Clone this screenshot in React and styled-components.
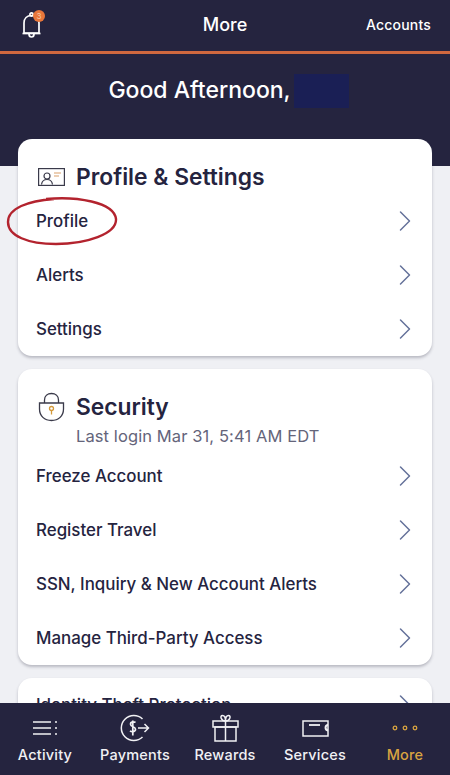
import React from "react";
import styled, { createGlobalStyle } from "styled-components";
import { ChevronRight } from "lucide-react";

const GlobalStyle = createGlobalStyle`
  html, body {
    margin: 0;
    padding: 0;
    background: #eff0f4;
  }
  * {
    box-sizing: border-box;
  }
`;

const navy = "#25243f";

const Screen = styled.div`
  width: 450px;
  height: 775px;
  display: flex;
  flex-direction: column;
  overflow: hidden;
  font-family: Inter, "Liberation Sans", sans-serif;
  background: #eff0f4;
  color: ${navy};
`;

const TopBar = styled.header`
  height: 54px;
  flex: none;
  display: grid;
  grid-template-columns: 1fr auto 1fr;
  align-items: center;
  padding: 0 19px 2px 19px;
  background: ${navy};
  border-bottom: 3px solid #d0683f;
  color: #fff;
`;

const BellWrap = styled.div`
  position: relative;
  width: 24px;
  height: 28px;
  margin-left: 2px;
`;

const Badge = styled.span`
  position: absolute;
  top: -1px;
  left: 12px;
  width: 12px;
  height: 12px;
  border-radius: 50%;
  background: #e8763a;
  color: #f8c9a8;
  font-size: 8px;
  line-height: 12px;
  text-align: center;
`;

const TopTitle = styled.div`
  font-size: 18px;
  font-weight: 500;
`;

const AccountsLink = styled.div`
  justify-self: end;
  font-size: 14px;
  font-weight: 500;
  letter-spacing: 0.2px;
`;

const Hero = styled.div`
  height: 112px;
  flex: none;
  display: flex;
  justify-content: center;
  align-items: flex-start;
  gap: 3px;
  padding: 20px 0 0 7px;
  background: ${navy};
  color: #fff;
`;

const Greeting = styled.div`
  margin-top: -1px;
  font-size: 23px;
  font-weight: 500;
  line-height: 34px;
`;

const Redacted = styled.div`
  width: 55px;
  height: 34px;
  background: #1a1f55;
`;

const Content = styled.main`
  flex: 1;
  min-height: 0;
  margin-top: -27px;
  padding: 0 18px;
  display: flex;
  flex-direction: column;
  gap: 13px;
  overflow: hidden;
  position: relative;
`;

const Card = styled.section`
  flex: none;
  background: #fff;
  border-radius: 14px;
  box-shadow: 0 2px 3px rgba(60, 60, 80, 0.3);
  padding: ${(props) => props.$top}px 0 0;
`;

const CardHead = styled.div`
  display: flex;
  align-items: center;
  gap: 11px;
  margin-bottom: 2px;
  padding: 0 18px 0 20px;
  height: 30px;
`;

const CardTitle = styled.h2`
  margin: 0;
  font-size: 22.8px;
  font-weight: 600;
  line-height: 30px;
  color: ${navy};
`;

const SubLine = styled.div`
  margin: 4px 0 3px 58px;
  font-size: 16.5px;
  letter-spacing: 0.1px;
  line-height: 20px;
  color: #64647a;
`;

const Row = styled.div`
  position: relative;
  height: 54px;
  display: flex;
  align-items: center;
  justify-content: space-between;
  padding: 0 9px 0 18px;
  font-size: 16.9px;
  font-weight: 500;
  color: ${navy};
`;

const Chevron = styled(ChevronRight)`
  width: 36px;
  height: 36px;
  color: #65729a;
  flex: none;
`;

const Scribble = styled.svg`
  position: absolute;
  left: -12px;
  top: 2px;
  pointer-events: none;
`;

const TabBar = styled.nav`
  position: relative;
  height: 72px;
  flex: none;
  display: grid;
  grid-template-columns: repeat(5, 90px);
  background: ${navy};
`;

const Tab = styled.div`
  display: flex;
  flex-direction: column;
  align-items: center;
  padding-top: 9px;
  color: ${(props) => (props.$active ? "#d9a441" : "#f1f1f4")};
`;

const TabIcon = styled.div`
  height: 32px;
  display: flex;
  align-items: center;
  justify-content: center;
`;

const TabLabel = styled.span`
  margin-top: 2px;
  font-size: 14.5px;
  font-weight: 500;
  letter-spacing: 0.2px;
`;

const BellIcon = () => (
  <svg width="24" height="28" viewBox="0 0 24 28" fill="none" stroke="#fff" strokeWidth="1.7" strokeLinejoin="round">
    <circle cx="10.5" cy="3.5" r="1.6" />
    <path d="M3 22V12c0-4.5 3-7.5 7.5-7.5S18 7.500 18 12v10z" />
    <path d="M1.500 22.500h18" />
    <path d="M8 23c0 4 5 4 5 0" />
  </svg>
);

const ProfileCardIcon = () => (
  <svg width="27" height="18" viewBox="0 0 27 18" fill="none" stroke="#3a3a4a" strokeWidth="1.2">
    <rect x="0.600" y="0.600" width="25.800" height="16.800" />
    <circle cx="9" cy="8" r="3" />
    <path d="M3.500 16.500c.5-3.500 2.500-5 5.500-5s5 1.500 5.500 5" />
    <path d="M16 5h7M16 8h5" stroke="#d9a06a" />
  </svg>
);

const LockIcon = () => (
  <svg width="27" height="30" viewBox="0 0 27 30" fill="none" stroke="#3a3a4a" strokeWidth="1.3">
    <path d="M6.500 11V8c0-4 3-6.500 7-6.500s7 2.500 7 6.500v3" />
    <path d="M1.500 11h24v6c0 7-5 11.500-12 11.500S1.500 24 1.500 17z" />
    <circle cx="13.500" cy="16.500" r="2" stroke="#d39a3c" />
    <path d="M13.500 18.500v4" stroke="#d39a3c" />
  </svg>
);

const ActivityIcon = () => (
  <svg width="26" height="16" viewBox="0 0 26 16" fill="none" stroke="currentColor" strokeWidth="1.600">
    <path d="M1 2h18M1 8h18M1 14h18" />
    <path d="M23 2h2M23 8h2M23 14h2" />
  </svg>
);

const PaymentsIcon = () => (
  <svg width="30" height="30" viewBox="0 0 30 30" fill="none" stroke="currentColor" strokeWidth="1.500">
    <path d="M22.500 6A12.500 12.500 0 1 0 22.500 24" />
    <path d="M15.500 9.500c-1-1-5-1.200-5 1.800 0 3 5 2 5 5 0 2.800-4 2.700-5.500 1.500M12.800 7.500v15" strokeWidth="1.700" />
    <path d="M18 15h10M24.500 11l4 4-4 4" />
  </svg>
);

const RewardsIcon = () => (
  <svg width="27" height="28" viewBox="0 0 27 28" fill="none" stroke="currentColor" strokeWidth="1.500">
    <rect x="1" y="7" width="25" height="6" />
    <rect x="3" y="13" width="21" height="14" />
    <path d="M13.500 7v20" />
    <path d="M13.500 7C9 7 7.500 1.500 10.500 1.500c2 0 3 2.500 3 5.500 0-3 1-5.500 3-5.500 3 0 1.500 5.500-3 5.500z" />
  </svg>
);

const ServicesIcon = () => (
  <svg width="27" height="17" viewBox="0 0 27 17" fill="none" stroke="currentColor" strokeWidth="1.500">
    <rect x="1" y="1" width="25" height="15" />
    <path d="M7 5h11" strokeWidth="1.800" />
    <path d="M26 5c-3 0-3.500 5 0 5.500" strokeWidth="2" />
  </svg>
);

const DotsIcon = () => (
  <svg width="26" height="6" viewBox="0 0 26 6" fill="none" stroke="currentColor" strokeWidth="1.300">
    <circle cx="3" cy="3" r="1.800" />
    <circle cx="13" cy="3" r="1.800" />
    <circle cx="23" cy="3" r="1.800" />
  </svg>
);

const tabs = [
  { label: "Activity", icon: <ActivityIcon /> },
  { label: "Payments", icon: <PaymentsIcon /> },
  { label: "Rewards", icon: <RewardsIcon /> },
  { label: "Services", icon: <ServicesIcon /> },
  { label: "More", icon: <DotsIcon />, active: true },
];

const profileRows = ["Profile", "Alerts", "Settings"];
const securityRows = [
  "Freeze Account",
  "Register Travel",
  "SSN, Inquiry & New Account Alerts",
  "Manage Third-Party Access",
];

function App() {
  return (
    <Screen>
      <GlobalStyle />
      <TopBar>
        <BellWrap>
          <BellIcon />
          <Badge>3</Badge>
        </BellWrap>
        <TopTitle>More</TopTitle>
        <AccountsLink>Accounts</AccountsLink>
      </TopBar>
      <Hero>
        <Greeting>Good Afternoon,</Greeting>
        <Redacted />
      </Hero>
      <Content>
        <Card $top={23}>
          <CardHead>
            <ProfileCardIcon />
            <CardTitle>Profile &amp; Settings</CardTitle>
          </CardHead>
          {profileRows.map((row) => (
            <Row key={row}>
              {row}
              <Chevron strokeWidth={1} />
              {row === "Profile" && (
                <Scribble width="112" height="50" viewBox="0 0 112 50" fill="none">
                  <path
                    d="M40 3C70 0 108 6 110 23c1 15-30 25-60 25C22 48 2 40 2 26 2 12 22 5 48 3"
                    stroke="#b3232e"
                    strokeWidth="2.400"
                  />
                </Scribble>
              )}
            </Row>
          ))}
        </Card>
        <Card $top={23}>
          <CardHead>
            <LockIcon />
            <CardTitle>Security</CardTitle>
          </CardHead>
          <SubLine>Last login Mar 31, 5:41 AM EDT</SubLine>
          {securityRows.map((row) => (
            <Row key={row}>
              {row}
              <Chevron strokeWidth={1} />
            </Row>
          ))}
        </Card>
        <Card $top={0}>
          <Row>
            Identity Theft Protection
            <Chevron strokeWidth={1} />
          </Row>
        </Card>
      </Content>
      <TabBar>
        {tabs.map((tab) => (
          <Tab key={tab.label} $active={tab.active}>
            <TabIcon>{tab.icon}</TabIcon>
            <TabLabel>{tab.label}</TabLabel>
          </Tab>
        ))}
      </TabBar>
    </Screen>
  );
}

export default App;
